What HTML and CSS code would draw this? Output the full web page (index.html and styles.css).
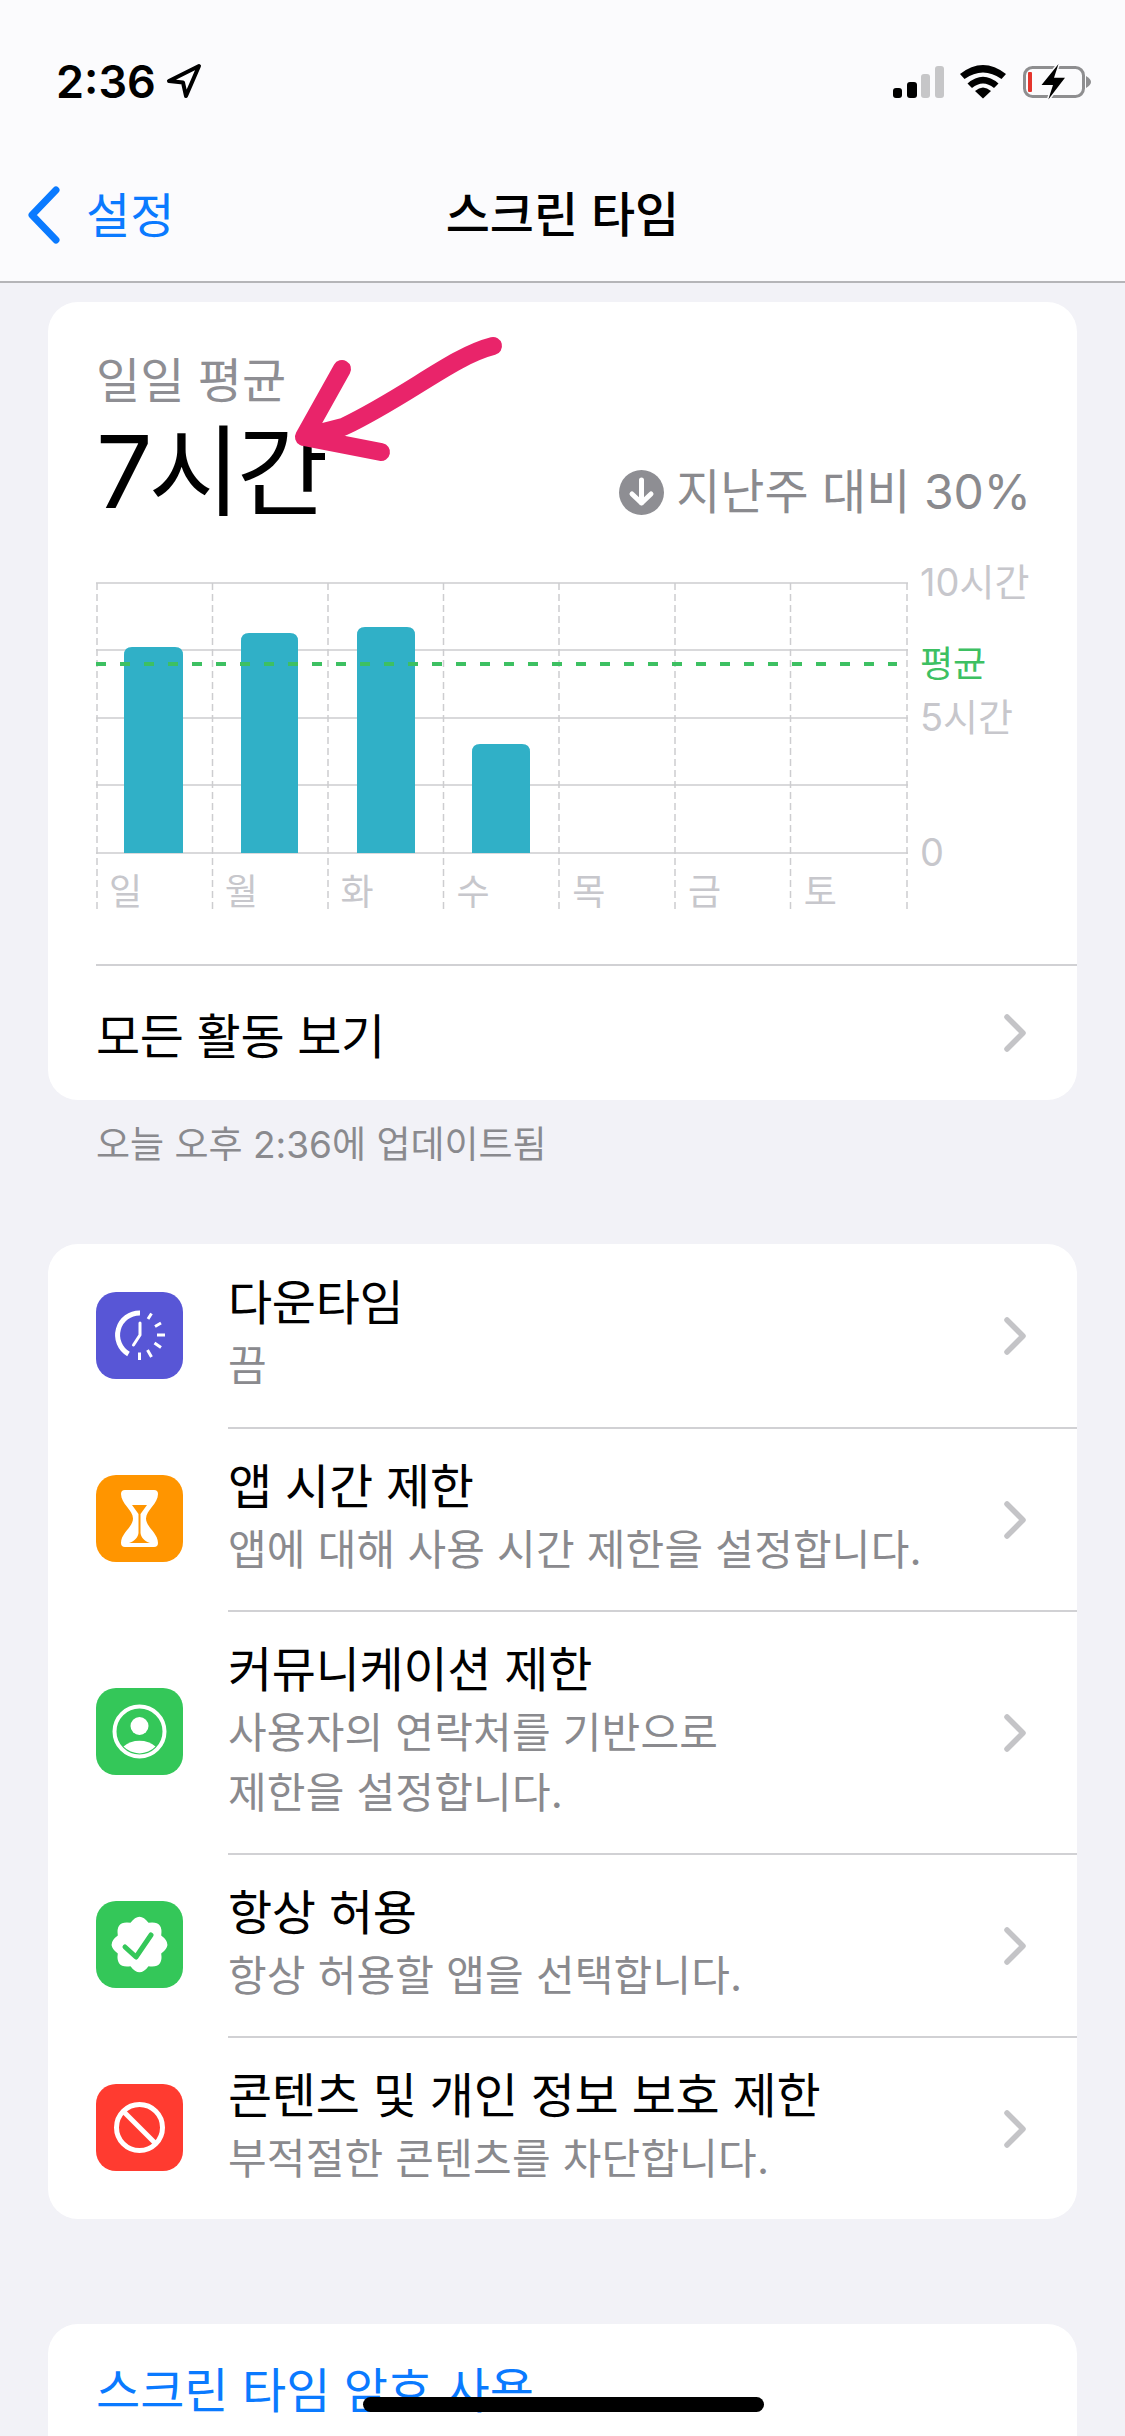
FILE: index.html
```html
<!DOCTYPE html>
<html lang="ko">

<head>
  <meta charset="UTF-8">
  <title>스크린 타임</title>
  <link rel="stylesheet" href="styles.css">
</head>

<body>
  <div class="screen">
    <header class="top">
      <div class="status">
        <div class="status-left">
          <span class="time">2:36</span>
          <svg class="loc" width="40" height="40" viewBox="0 0 40 40">
            <path d="M34 4 L4 19 L18 20.5 L21 34 Z" fill="#fff" stroke="#000" stroke-width="4" stroke-linejoin="round" />
          </svg>
        </div>
        <svg class="status-right" width="200" height="40" viewBox="0 0 200 40">
          <!-- signal -->
          <rect x="0" y="23" width="9" height="10" rx="3" fill="#000" />
          <rect x="14" y="17" width="10" height="16" rx="3" fill="#000" />
          <rect x="28" y="9" width="9" height="24" rx="3" fill="#c6c6c8" />
          <rect x="42" y="1" width="9" height="32" rx="3" fill="#c6c6c8" />
          <!-- wifi -->
          <path d="M67 9 Q90 -9 113 9 L108.500 14 Q90 1 71.500 14 Z" fill="#000" />
          <path d="M74.500 18.500 Q90 5 105.500 18.500 L101 23 Q90 14 79 23 Z" fill="#000" />
          <path d="M82 26 Q90 19 98 26 L90 33.500 Z" fill="#000" />
          <!-- battery -->
          <rect x="131.500" y="2.500" width="59" height="29" rx="8" fill="none" stroke="#8e8e90" stroke-width="3" />
          <path d="M193 11 Q198 14 198 17 Q198 20 193 23 Z" fill="#8e8e90" />
          <rect x="135" y="7" width="4" height="20" rx="1" fill="#e5352d" />
          <path class="bolt" d="M165.500 -1 L148.500 20 L160 20 L155.300 34.500 L172 12.700 L161 12.700 Z" />
        </svg>
      </div>
      <nav class="nav">
        <a class="back">
          <svg width="36" height="58" viewBox="0 0 36 58">
            <path d="M30 4 L6 29 L30 54" fill="none" stroke="#0a7aff" stroke-width="7" stroke-linecap="round" stroke-linejoin="round" />
          </svg>
          <span class="back-label">설정</span>
        </a>
        <h1 class="nav-title">스크린 타임</h1>
      </nav>
    </header>

    <section class="card summary">
      <div class="label">일일 평균</div>
      <div class="head">
        <div class="big">7시간</div>
        <div class="delta">
          <svg width="45" height="45" viewBox="0 0 45 45">
            <circle cx="22.500" cy="22.500" r="22.500" fill="#8e8e93" />
            <path d="M22.500 10 V33 M13 24 L22.500 33 L32 24" fill="none" stroke="#fff" stroke-width="5" stroke-linecap="round" stroke-linejoin="round" />
          </svg>
          <span>지난주 대비 30%</span>
        </div>
      </div>

      <div class="chart">
        <div class="plot">
          <svg class="grid" width="812" height="331" viewBox="0 0 812 331">
            <g stroke="#cdcdd0" stroke-width="1.500">
              <path d="M0 1 H812 M0 68 H812 M0 136 H812 M0 203 H812 M0 271 H812" />
            </g>
            <g stroke="#cdcdd0" stroke-width="1.500" stroke-dasharray="7 4" fill="none">
              <path d="M1 1 V331 M116.500 1 V331 M232 1 V331 M347.500 1 V331 M463 1 V331 M579 1 V331 M694.500 1 V331 M811 1 V331" />
            </g>
            <g fill="#30b0c7">
              <path d="M28 271 V73 Q28 65 36 65 H79 Q87 65 87 73 V271 Z" />
              <path d="M145 271 V59 Q145 51 153 51 H194 Q202 51 202 59 V271 Z" />
              <path d="M261 271 V53 Q261 45 269 45 H311 Q319 45 319 53 V271 Z" />
              <path d="M376 271 V170 Q376 162 384 162 H426 Q434 162 434 170 V271 Z" />
            </g>
            <path d="M0 82 H801" stroke="#3dc062" stroke-width="4" stroke-dasharray="10 14" />
          </svg>
          <div class="days">
            <span>일</span><span>월</span><span>화</span><span>수</span><span>목</span><span>금</span><span>토</span>
          </div>
        </div>
        <div class="axis">
          <span class="tick">10시간</span>
          <span class="tick avg">평균</span>
          <span class="tick five">5시간</span>
          <span class="tick zero">0</span>
        </div>
      </div>

      <div class="all">
        <span>모든 활동 보기</span>
        <svg class="chev" width="26" height="38" viewBox="0 0 26 38">
          <path d="M4 3 L20 19 L4 35" fill="none" stroke="#c4c4c7" stroke-width="5.500" stroke-linecap="round" stroke-linejoin="round" />
        </svg>
      </div>
    </section>

    <p class="note">오늘 오후 2:36에 업데이트됨</p>

    <section class="card list">
      <div class="row">
        <svg class="icon" width="87" height="87" viewBox="0 0 87 87">
          <rect width="87" height="87" rx="20" fill="#5856d6" />
          <path d="M44 21 A22 22 0 0 0 32.500 62" fill="none" stroke="#fff" stroke-width="5" />
          <path d="M44 31 V43 L37.500 53" fill="none" stroke="#fff" stroke-width="3" stroke-linecap="round" stroke-linejoin="round" />
          <path d="M52 27 L55.500 21.500 M59 34.500 L65 31 M61 43 H69 M58.500 51 L65 55.500 M51.500 58 L55.500 65 M43.500 60.500 V68" stroke="#fff" stroke-width="3" />
        </svg>
        <div class="row-body">
          <div class="text">
            <div class="title">다운타임</div>
            <div class="sub">끔</div>
          </div>
          <svg class="chev" width="26" height="38" viewBox="0 0 26 38">
            <path d="M4 3 L20 19 L4 35" fill="none" stroke="#c4c4c7" stroke-width="5.500" stroke-linecap="round" stroke-linejoin="round" />
          </svg>
        </div>
      </div>

      <div class="row">
        <svg class="icon" width="87" height="87" viewBox="0 0 87 87">
          <rect width="87" height="87" rx="20" fill="#ff9500" />
          <path d="M29 15 H58 Q62 15 62 19 C62 29 50 35 50 43.500 C50 52 62 58 62 68 Q62 72 58 72 H29 Q25 72 25 68 C25 58 37 52 37 43.500 C37 35 25 29 25 19 Q25 15 29 15 Z" fill="#fff" />
          <path d="M36 30 H51 L44.500 39 V58 C45 62 48 66 54 68 H33 C39 66 42 62 42.500 58 V39 Z" fill="#ff9500" />
        </svg>
        <div class="row-body">
          <div class="text">
            <div class="title">앱 시간 제한</div>
            <div class="sub">앱에 대해 사용 시간 제한을 설정합니다.</div>
          </div>
          <svg class="chev" width="26" height="38" viewBox="0 0 26 38">
            <path d="M4 3 L20 19 L4 35" fill="none" stroke="#c4c4c7" stroke-width="5.500" stroke-linecap="round" stroke-linejoin="round" />
          </svg>
        </div>
      </div>

      <div class="row tall">
        <svg class="icon" width="87" height="87" viewBox="0 0 87 87">
          <rect width="87" height="87" rx="20" fill="#34c759" />
          <circle cx="43.500" cy="43.500" r="25" fill="none" stroke="#fff" stroke-width="4" />
          <circle cx="43.500" cy="38" r="9" fill="#fff" />
          <path d="M27.500 58.500 Q34 52.700 43.500 52.700 T59.500 58.500 A22 22 0 0 1 27.500 58.500 Z" fill="#fff" />
        </svg>
        <div class="row-body">
          <div class="text">
            <div class="title">커뮤니케이션 제한</div>
            <div class="sub">사용자의 연락처를 기반으로<br>제한을 설정합니다.</div>
          </div>
          <svg class="chev" width="26" height="38" viewBox="0 0 26 38">
            <path d="M4 3 L20 19 L4 35" fill="none" stroke="#c4c4c7" stroke-width="5.500" stroke-linecap="round" stroke-linejoin="round" />
          </svg>
        </div>
      </div>

      <div class="row">
        <svg class="icon" width="87" height="87" viewBox="0 0 87 87">
          <rect width="87" height="87" rx="20" fill="#34c759" />
          <path d="M34.500 21.800 Q43.500 9.500 52.500 21.800 Q67.500 19.500 65.200 34.500 Q77.500 43.500 65.200 52.500 Q67.500 67.500 52.500 65.200 Q43.500 77.500 34.500 65.200 Q19.500 67.500 21.800 52.500 Q9.500 43.500 21.800 34.500 Q19.500 19.500 34.500 21.800 Z" fill="#fff" />
          <path d="M29 46 L40 56 L55 34" fill="none" stroke="#34c759" stroke-width="5" stroke-linecap="round" stroke-linejoin="round" />
        </svg>
        <div class="row-body">
          <div class="text">
            <div class="title">항상 허용</div>
            <div class="sub">항상 허용할 앱을 선택합니다.</div>
          </div>
          <svg class="chev" width="26" height="38" viewBox="0 0 26 38">
            <path d="M4 3 L20 19 L4 35" fill="none" stroke="#c4c4c7" stroke-width="5.500" stroke-linecap="round" stroke-linejoin="round" />
          </svg>
        </div>
      </div>

      <div class="row">
        <svg class="icon" width="87" height="87" viewBox="0 0 87 87">
          <rect width="87" height="87" rx="20" fill="#ff3b30" />
          <circle cx="43.500" cy="43.500" r="23" fill="none" stroke="#fff" stroke-width="5" />
          <path d="M27 27 L60 60" stroke="#fff" stroke-width="5" />
        </svg>
        <div class="row-body">
          <div class="text">
            <div class="title">콘텐츠 및 개인 정보 보호 제한</div>
            <div class="sub">부적절한 콘텐츠를 차단합니다.</div>
          </div>
          <svg class="chev" width="26" height="38" viewBox="0 0 26 38">
            <path d="M4 3 L20 19 L4 35" fill="none" stroke="#c4c4c7" stroke-width="5.500" stroke-linecap="round" stroke-linejoin="round" />
          </svg>
        </div>
      </div>
    </section>

    <section class="card passcode">스크린 타임 암호 사용</section>

    <!-- pen mark drawn on top of the screenshot -->
    <svg class="scribble" width="260" height="170" viewBox="0 0 260 170">
      <path d="M205 16 C165 26 120 66 55 97 L16 107 M54 39 L16 107 L93 122" fill="none" stroke="#e9246a" stroke-width="18" stroke-linecap="round" stroke-linejoin="round" />
    </svg>
    <div class="home-bar"></div>
  </div>
</body>

</html>
```

FILE: styles.css
```css
* {
  box-sizing: border-box;
}

body {
  margin: 0;
  background-color: #f2f2f7;
  font-family: Inter, "Noto Sans CJK KR", sans-serif;
  color: #000000;
}

.screen {
  position: relative;
  width: 1125px;
  height: 2436px;
  overflow: hidden;
  background-color: #f2f2f7;
}

/* Status bar + nav */
.top {
  height: 283px;
  background-color: #fbfbfd;
  border-bottom: 2px solid #b5b5b8;
}

.status {
  display: flex;
  justify-content: space-between;
  align-items: center;
  height: 164px;
  padding: 0 32px 0 56px;
}

.status-left {
  display: flex;
  align-items: center;
  gap: 9px;
}

.time {
  font-size: 45px;
  font-weight: 600;
  line-height: 50px;
}

.status-right {
  margin-top: 6px;
  overflow: visible;
}

.bolt {
  fill: #000000;
  stroke: #fbfbfd;
  stroke-width: 3px;
  paint-order: stroke;
}

.nav {
  position: relative;
  display: flex;
  align-items: center;
  justify-content: center;
  height: 102px;
  padding-bottom: 8px;
}

.back {
  position: absolute;
  left: 26px;
  top: 18px;
  display: flex;
  align-items: center;
  gap: 24px;
  font-size: 48px;
  color: #0a7aff;
}

.back-label {
  margin-top: -5px;
}

.nav-title {
  margin: 0;
  font-size: 48px;
  font-weight: 500;
}

/* Cards */
.card {
  margin: 0 48px;
  background-color: #ffffff;
  border-radius: 30px;
}

.summary {
  margin-top: 19px;
  padding-top: 49px;
}

.label {
  margin-left: 48px;
  font-size: 48px;
  line-height: 60px;
  color: #8e8e93;
}

.head {
  display: flex;
  justify-content: space-between;
  align-items: flex-end;
  margin: 6px 46px 0 48px;
}

.big {
  font-size: 100px;
  line-height: 110px;
  letter-spacing: -4px;
}

.delta {
  display: flex;
  align-items: center;
  gap: 12px;
  margin-bottom: 8px;
  font-size: 48px;
  line-height: 54px;
  color: #8a8a8e;
}

/* Chart */
.chart {
  display: flex;
  gap: 12px;
  height: 350px;
  margin: 35px 0 0 48px;
  padding-top: 20px;
}

.plot {
  display: grid;
  width: 812px;
  height: 331px;
}

.grid,
.days {
  grid-area: 1 / 1;
}

.days {
  display: grid;
  grid-template-columns: repeat(7, 115.800px);
  align-self: end;
  padding-left: 13px;
  font-size: 36px;
  line-height: 42px;
  color: #c7c7cc;
}

.axis {
  display: flex;
  flex-direction: column;
  margin-top: -20px;
  font-size: 38px;
  line-height: 40px;
  color: #c7c7cc;
}

.tick.avg {
  margin-top: 42px;
  font-size: 36px;
  color: #3dc062;
}

.tick.five {
  margin-top: 13px;
}

.tick.zero {
  margin-top: 95px;
}

/* Rows */
.all {
  display: flex;
  justify-content: space-between;
  align-items: center;
  height: 136px;
  margin: 52px 0 0 48px;
  padding-right: 48px;
  border-top: 2px solid #d1d1d4;
  font-size: 48px;
  letter-spacing: -0.4px;
}

.note {
  margin: 20px 0 74px 96px;
  font-size: 37px;
  line-height: 50px;
  color: #8a8a8e;
}

.row {
  display: flex;
  align-items: stretch;
  height: 183px;
}

.row.tall {
  height: 243px;
}

.icon {
  flex: none;
  align-self: center;
  margin: 0 45px 0 48px;
}

.row-body {
  flex: 1;
  display: flex;
  align-items: center;
  justify-content: space-between;
  padding-right: 48px;
  border-top: 2px solid #d1d1d4;
}

.row:first-child .row-body {
  border-top: none;
}

.text {
  padding-bottom: 3px;
}

.title {
  margin-bottom: 3px;
  font-size: 48px;
  line-height: 60px;
  letter-spacing: -0.3px;
}

.sub {
  font-size: 42px;
  line-height: 60px;
  letter-spacing: 0.2px;
  color: #8a8a8e;
}

.passcode {
  margin-top: 105px;
  padding: 37px 48px 0;
  height: 200px;
  font-size: 48px;
  line-height: 60px;
  color: #0a7aff;
}

/* Overlays */
.scribble {
  position: absolute;
  left: 288px;
  top: 330px;
}

.home-bar {
  position: absolute;
  left: 363px;
  top: 2397px;
  width: 401px;
  height: 15px;
  border-radius: 8px;
  background-color: #000000;
}
```
